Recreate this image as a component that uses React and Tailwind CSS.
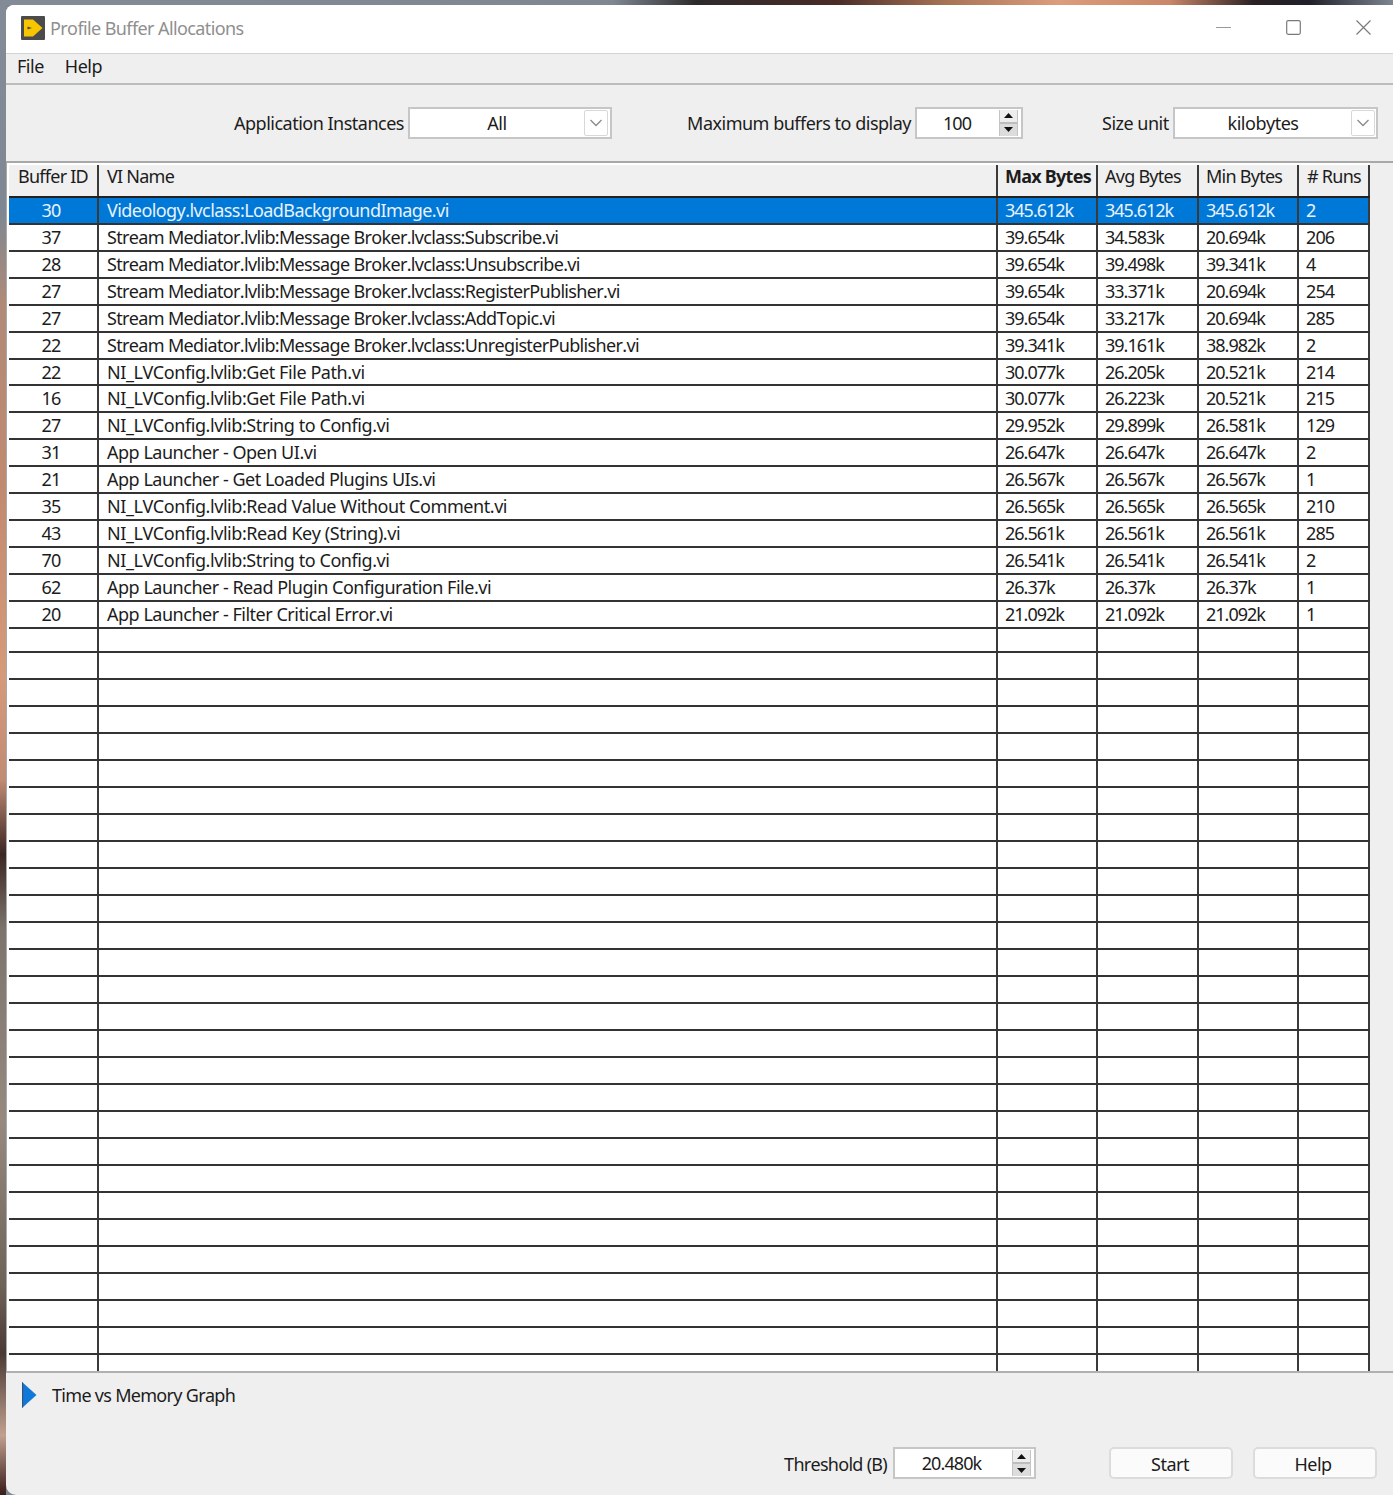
import React from "react";

const data = [
  ["30", "Videology.lvclass:LoadBackgroundImage.vi", "345.612k", "345.612k", "345.612k", "2"],
  ["37", "Stream Mediator.lvlib:Message Broker.lvclass:Subscribe.vi", "39.654k", "34.583k", "20.694k", "206"],
  ["28", "Stream Mediator.lvlib:Message Broker.lvclass:Unsubscribe.vi", "39.654k", "39.498k", "39.341k", "4"],
  ["27", "Stream Mediator.lvlib:Message Broker.lvclass:RegisterPublisher.vi", "39.654k", "33.371k", "20.694k", "254"],
  ["27", "Stream Mediator.lvlib:Message Broker.lvclass:AddTopic.vi", "39.654k", "33.217k", "20.694k", "285"],
  ["22", "Stream Mediator.lvlib:Message Broker.lvclass:UnregisterPublisher.vi", "39.341k", "39.161k", "38.982k", "2"],
  ["22", "NI_LVConfig.lvlib:Get File Path.vi", "30.077k", "26.205k", "20.521k", "214"],
  ["16", "NI_LVConfig.lvlib:Get File Path.vi", "30.077k", "26.223k", "20.521k", "215"],
  ["27", "NI_LVConfig.lvlib:String to Config.vi", "29.952k", "29.899k", "26.581k", "129"],
  ["31", "App Launcher - Open UI.vi", "26.647k", "26.647k", "26.647k", "2"],
  ["21", "App Launcher - Get Loaded Plugins UIs.vi", "26.567k", "26.567k", "26.567k", "1"],
  ["35", "NI_LVConfig.lvlib:Read Value Without Comment.vi", "26.565k", "26.565k", "26.565k", "210"],
  ["43", "NI_LVConfig.lvlib:Read Key (String).vi", "26.561k", "26.561k", "26.561k", "285"],
  ["70", "NI_LVConfig.lvlib:String to Config.vi", "26.541k", "26.541k", "26.541k", "2"],
  ["62", "App Launcher - Read Plugin Configuration File.vi", "26.37k", "26.37k", "26.37k", "1"],
  ["20", "App Launcher - Filter Critical Error.vi", "21.092k", "21.092k", "21.092k", "1"],
];
const rows = [...data, ...Array.from({ length: 27 }, () => ["", "", "", "", "", ""])];

const cell = "flex items-center h-full border-r-2 border-[#3a3a3a] whitespace-nowrap overflow-hidden";
const widths = ["w-[90px] justify-center", "w-[899px] pl-[8px]", "w-[100px] pl-[7px]", "w-[101px] pl-[7px]", "w-[100px] pl-[7px]", "w-[71px] pl-[8px]"];
const rowExtra = ["pr-[4px] tracking-[-0.9px]", "", "tracking-[-1px]", "tracking-[-1px]", "tracking-[-1px]", "tracking-[-0.9px] pl-[7px]!"];

const nameTracking = (name) => {
  if (name.startsWith("Stream")) return "tracking-[-0.66px]";
  if (name.startsWith("Videology")) return "tracking-[-0.57px]";
  if (name.startsWith("App")) return "tracking-[-0.48px]";
  return "tracking-[-0.43px]";
};
const rowHeight = (i) => (i === 6 ? "h-[26px]" : i === 16 ? "h-[24px]" : "h-[27px]");

function Chevron() {
  return (
    <svg width="14" height="8" viewBox="0 0 14 8" fill="none">
      <path d="M1.5 1 L7 6.5 L12.5 1" stroke="#8a8a8a" strokeWidth="1.3" />
    </svg>
  );
}

function Select({ w, textW, children }) {
  return (
    <div className={`flex items-center h-[32px] bg-white border-2 border-[#c6c6c6] ${w}`}>
      <div className={`text-center ${textW}`}>{children}</div>
      <div className="flex items-center justify-center w-[24px] h-[26px] border border-[#d8d8d8] rounded-[2px] bg-white">
        <Chevron />
      </div>
    </div>
  );
}

function Spinner() {
  return (
    <div className="flex flex-col w-[19px] h-[26px] shrink-0 border-x border-[#c4c4c4]">
      <div className="flex items-center justify-center h-[14px] bg-[#ededed] border-b-2 border-[#bdbdbd]">
        <svg width="9" height="5" viewBox="0 0 9 5"><path d="M4.5 0 L9 5 L0 5 Z" fill="#111" /></svg>
      </div>
      <div className="flex items-center justify-center h-[12px] bg-[#dcdcdc]">
        <svg width="9" height="5" viewBox="0 0 9 5"><path d="M0 0 L9 0 L4.5 5 Z" fill="#111" /></svg>
      </div>
    </div>
  );
}

function Numeric({ w, textW, children }) {
  return (
    <div className={`flex items-center h-[32px] bg-white border-2 border-[#c6c6c6] ${w}`}>
      <div className={`text-center tracking-[-0.9px] ${textW}`}>{children}</div>
      <Spinner />
    </div>
  );
}

export default function App() {
  return (
    <div className="w-[1393px] h-[1495px] overflow-hidden flex flex-col bg-[#7d8691] text-[18px] leading-none text-[#1c1c1c] tracking-[-0.5px] [font-kerning:none] [font-family:'Noto_Sans',sans-serif]">
      <div className="h-[5px] shrink-0 bg-[linear-gradient(90deg,#838b97_0%,#7e8792_44%,#2d2a2c_50%,#4a2b27_60%,#a87456_68%,#dc9d7c_76%,#c98668_84%,#2a2123_90%,#20202a_94%,#7d8691_100%)]" />
      <div className="flex flex-1 min-h-0">
        <div className="w-[6px] shrink-0 bg-[linear-gradient(180deg,#838b97_0%,#7f8892_14%,#b08a78_20%,#c08a70_32%,#d69a7a_45%,#c08c74_52%,#3c2624_57%,#7c746c_62%,#968a80_75%,#6d6258_86%,#4a3a34_90.5%,#c0a090_96%,#3a1c18_100%)]" />
        <div className="flex-1 flex flex-col bg-[#efefef] rounded-tl-[8px] rounded-bl-[10px] overflow-hidden">
          {/* title bar */}
          <div className="h-[49px] shrink-0 flex items-center pb-[2px] bg-white border-b border-[#d4d4d4]">
            <svg className="ml-[15px]" width="24" height="24" viewBox="0 0 24 24">
              <rect width="24" height="24" rx="1" fill="#4b4b4b" />
              <path d="M3 3.5 L12 3.5 L21.5 12 L12 20.5 L3 20.5 Z" fill="#f7c600" />
              <path d="M6.5 10.5 L11 12 L6.5 13.5 Z" fill="#4b4b4b" />
            </svg>
            <span className="ml-[5px] text-[#8f8f8f] tracking-[-0.6px]">Profile Buffer Allocations</span>
            <div className="ml-auto flex items-center mr-[22px] mb-[2px]">
              <svg width="15" height="15" viewBox="0 0 15 15"><path d="M0 7.5 H15" stroke="#999" strokeWidth="1.2" /></svg>
              <svg className="ml-[55px]" width="15" height="15" viewBox="0 0 15 15" fill="none"><rect x="0.7" y="0.7" width="13.6" height="13.6" rx="1.5" stroke="#7a7a7a" strokeWidth="1.2" /></svg>
              <svg className="ml-[55px]" width="15" height="15" viewBox="0 0 15 15" fill="none"><path d="M0.5 0.5 L14.5 14.5 M14.5 0.5 L0.5 14.5" stroke="#7a7a7a" strokeWidth="1.2" /></svg>
            </div>
          </div>
          {/* menu */}
          <div className="h-[31px] shrink-0 flex items-center pl-[11px] pb-[5px] gap-[21px] border-b-2 border-[#bcbcbc]">
            <span>File</span>
            <span>Help</span>
          </div>
          {/* toolbar */}
          <div className="h-[78px] shrink-0 flex items-center pb-[1px] border-b-2 border-[#a8a8a8]">
            <div className="ml-[198px] w-[200px] text-right whitespace-nowrap mr-[4px]">Application Instances</div>
            <Select w="w-[204px]" textW="w-[174px]">All</Select>
            <div className="ml-[75px] w-[224px] text-right whitespace-nowrap mr-[4px]">Maximum buffers to display</div>
            <Numeric w="w-[108px]" textW="w-[82px] pr-[2px]">100</Numeric>
            <div className="ml-[79px] w-[66px] text-right whitespace-nowrap mr-[5px]">Size unit</div>
            <Select w="w-[205px]" textW="w-[176px]">kilobytes</Select>
          </div>
          {/* table */}
          <div className="flex-1 min-h-0 flex border-b-2 border-[#b0b0b0]">
            <div className="w-[3px] shrink-0 bg-white border-l border-[#a9a9a9]" />
            <div className="w-[1361px] shrink-0 flex flex-col bg-white">
              <div className="h-[33px] shrink-0 flex bg-[#f0f0f0] border-t-2 border-white">
                {["Buffer ID", "VI Name", "Max Bytes", "Avg Bytes", "Min Bytes", "# Runs"].map((h, i) => (
                  <div key={h} className={`${cell} ${widths[i]} pb-[10px] tracking-[-0.75px] ${i === 2 ? "font-bold" : ""}`}>{h}</div>
                ))}
              </div>
              <div className="flex-1 min-h-0 flex flex-col border-t-2 border-[#222]">
                {rows.map((r, ri) => (
                  <div key={ri} className={`${rowHeight(ri)} shrink-0 flex border-b-2 border-[#333] ${ri === 0 ? "bg-[#0078d7] text-[#e8f2fb]" : "bg-white"}`}>
                    {r.map((c, i) => (
                      <div key={i} className={`${cell} ${widths[i]} ${rowExtra[i]} ${i === 1 ? nameTracking(c) : ""} ${ri === 6 ? "" : "pb-[2px]"}`}>{c}</div>
                    ))}
                  </div>
                ))}
                <div className="flex-1 flex">
                  {widths.map((w, i) => <div key={i} className={`${cell} ${w}`} />)}
                </div>
              </div>
            </div>
          </div>
          {/* bottom panel */}
          <div className="h-[122px] shrink-0 flex flex-col">
            <div className="flex items-center h-[44px] pl-[16px]">
              <svg width="15" height="26" viewBox="0 0 15 26">
                <path d="M0 0 L14.5 13 L0 26 Z" fill="#0f78d8" />
                <path d="M0.5 0.5 V25.5" stroke="#37506b" strokeWidth="1.2" />
              </svg>
              <span className="ml-[15px] tracking-[-0.7px]">Time vs Memory Graph</span>
            </div>
            <div className="flex items-center mt-[30px]">
              <div className="ml-[738px] w-[143px] text-right whitespace-nowrap mr-[6px] pt-[1px] tracking-[-0.72px]">Threshold (B)</div>
              <Numeric w="w-[143px]" textW="w-[117px] pr-[4px]">20.480k</Numeric>
              <button className="ml-[73px] w-[124px] h-[32px] bg-[#fbfbfb] border-2 border-[#dcdcdc] rounded-[5px] pt-[1px] pr-[2px]">Start</button>
              <button className="ml-[20px] w-[124px] h-[32px] bg-[#fbfbfb] border-2 border-[#dcdcdc] rounded-[5px] pt-[1px] pr-[4px]">Help</button>
            </div>
          </div>
        </div>
      </div>
    </div>
  );
}
